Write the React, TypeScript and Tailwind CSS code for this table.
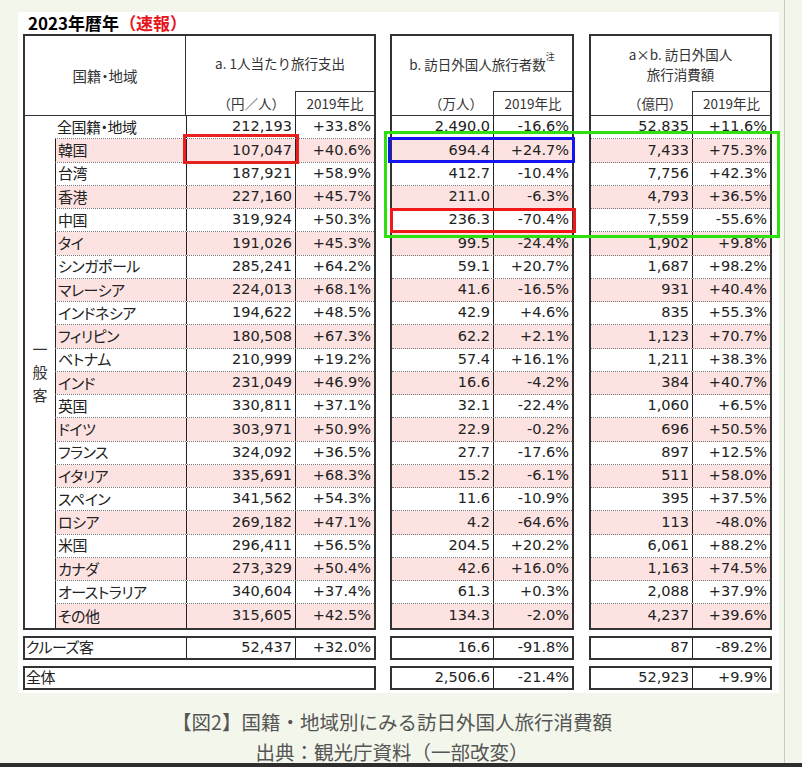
import React from 'react';

// 国籍・地域別 訪日外国人旅行消費額（2023年暦年 速報）
const rows: string[][] = [
  ['全国籍・地域', '212,193', '+33.8%', '2,490.0', '-16.6%', '52,835', '+11.6%'],
  ['韓国', '107,047', '+40.6%', '694.4', '+24.7%', '7,433', '+75.3%'],
  ['台湾', '187,921', '+58.9%', '412.7', '-10.4%', '7,756', '+42.3%'],
  ['香港', '227,160', '+45.7%', '211.0', '-6.3%', '4,793', '+36.5%'],
  ['中国', '319,924', '+50.3%', '236.3', '-70.4%', '7,559', '-55.6%'],
  ['タイ', '191,026', '+45.3%', '99.5', '-24.4%', '1,902', '+9.8%'],
  ['シンガポール', '285,241', '+64.2%', '59.1', '+20.7%', '1,687', '+98.2%'],
  ['マレーシア', '224,013', '+68.1%', '41.6', '-16.5%', '931', '+40.4%'],
  ['インドネシア', '194,622', '+48.5%', '42.9', '+4.6%', '835', '+55.3%'],
  ['フィリピン', '180,508', '+67.3%', '62.2', '+2.1%', '1,123', '+70.7%'],
  ['ベトナム', '210,999', '+19.2%', '57.4', '+16.1%', '1,211', '+38.3%'],
  ['インド', '231,049', '+46.9%', '16.6', '-4.2%', '384', '+40.7%'],
  ['英国', '330,811', '+37.1%', '32.1', '-22.4%', '1,060', '+6.5%'],
  ['ドイツ', '303,971', '+50.9%', '22.9', '-0.2%', '696', '+50.5%'],
  ['フランス', '324,092', '+36.5%', '27.7', '-17.6%', '897', '+12.5%'],
  ['イタリア', '335,691', '+68.3%', '15.2', '-6.1%', '511', '+58.0%'],
  ['スペイン', '341,562', '+54.3%', '11.6', '-10.9%', '395', '+37.5%'],
  ['ロシア', '269,182', '+47.1%', '4.2', '-64.6%', '113', '-48.0%'],
  ['米国', '296,411', '+56.5%', '204.5', '+20.2%', '6,061', '+88.2%'],
  ['カナダ', '273,329', '+50.4%', '42.6', '+16.0%', '1,163', '+74.5%'],
  ['オーストラリア', '340,604', '+37.4%', '61.3', '+0.3%', '2,088', '+37.9%'],
  ['その他', '315,605', '+42.5%', '134.3', '-2.0%', '4,237', '+39.6%'],
];

const jp = "font-['Noto_Sans_CJK_JP',sans-serif]";
const name = `${jp} text-[15px] text-[#222] tracking-[-0.5px] [font-feature-settings:'palt']`;
const num = "font-['DejaVu_Sans','Noto_Sans_CJK_JP',sans-serif] text-[14.5px] text-[#222]";

function rowBg(i: number) {
  return i % 2 === 1 ? 'bg-[#fde2e2]' : 'bg-white';
}

function rowLine(i: number) {
  return i < rows.length - 1 ? 'border-b border-dotted border-b-[#777]' : '';
}

function NumCell({ value, width, first }: { value: string; width: string; first?: boolean }) {
  return (
    <div className={`${width} ${first ? '' : 'border-l border-l-[#222]'} h-full flex items-center justify-end pr-[3px] ${num}`}>
      {value}
    </div>
  );
}

function MainTableA() {
  return (
    <div className="w-[353px] border-2 border-[#333] bg-white">
      {/* ヘッダー */}
      <div className="flex h-[80px] border-b border-[#333]">
        <div className={`w-[161px] border-r border-[#333] flex items-center justify-center text-[14.5px] text-[#333] ${jp} [font-feature-settings:'palt']`}>
          国籍・地域
        </div>
        <div className="flex-1 flex flex-col">
          <div className={`flex-1 flex items-center justify-center text-[13.5px] text-[#333] ${jp}`}>
            a. 1人当たり旅行支出
          </div>
          <div className="flex h-[24px]">
            <div className={`w-[109px] flex items-center justify-end pr-[10px] text-[13.5px] text-[#333] ${jp}`}>（円／人）</div>
            <div className={`flex-1 border-l border-t border-[#333] flex items-center justify-center text-[13.5px] text-[#333] ${jp}`}>2019年比</div>
          </div>
        </div>
      </div>
      {/* 本体 */}
      <div className="flex">
        <div className={`w-[30px] flex flex-col items-center justify-center text-[15px] leading-[23px] text-[#333] ${jp}`}>
          <span>一</span>
          <span>般</span>
          <span>客</span>
        </div>
        <div className="flex-1 flex flex-col">
          {rows.map((r, i) => (
            <div key={r[0]} className={`flex h-[23.25px] ${rowLine(i)}`}>
              <div className={`w-[131px] h-full flex items-center pl-[2px] ${name} ${i === 0 ? 'bg-white' : `border-l border-l-[#222] ${rowBg(i)}`}`}>
                {r[0]}
              </div>
              <div className={`flex flex-1 h-full ${rowBg(i)}`}>
                <NumCell value={r[1]} width="w-[109px]" />
                <NumCell value={r[2]} width="flex-1" />
              </div>
            </div>
          ))}
        </div>
      </div>
    </div>
  );
}

function MainTable({ width, valueWidth, title, unit, a, b }: { width: string; valueWidth: string; title: React.ReactNode; unit: string; a: number; b: number }) {
  return (
    <div className={`${width} border-2 border-[#333] bg-white`}>
      <div className="flex flex-col h-[80px] border-b border-[#333]">
        <div className={`flex-1 flex flex-col items-center justify-center text-[13.5px] leading-[20px] text-[#333] ${jp}`}>
          {title}
        </div>
        <div className="flex h-[24px]">
          <div className={`${valueWidth} flex items-center justify-end pr-[10px] text-[13.5px] text-[#333] ${jp}`}>{unit}</div>
          <div className={`flex-1 border-l border-t border-[#333] flex items-center justify-center text-[13.5px] text-[#333] ${jp}`}>2019年比</div>
        </div>
      </div>
      <div className="flex flex-col">
        {rows.map((r, i) => (
          <div key={r[0]} className={`flex h-[23.25px] ${rowBg(i)} ${rowLine(i)}`}>
            <NumCell value={r[a]} width={valueWidth} first />
            <NumCell value={r[b]} width="flex-1" />
          </div>
        ))}
      </div>
    </div>
  );
}

function SmallRow({ width, cells }: { width: string; cells: { text: string; w: string; left?: boolean }[] }) {
  return (
    <div className={`${width} h-[24px] border-2 border-[#333] bg-white flex`}>
      {cells.map((c, i) => (
        <div
          key={i}
          className={`${c.w} h-full flex items-center ${i > 0 ? 'border-l border-l-[#222]' : ''} ${c.left ? `justify-start pl-[1px] ${name}` : `justify-end pr-[3px] ${num}`}`}
        >
          {c.text}
        </div>
      ))}
    </div>
  );
}

export default function App() {
  return (
    <div className="relative w-[802px] h-[767px] overflow-hidden bg-[#f3f6ea] flex">
      <div className="w-[785px] h-full border-r border-r-[#c9ccc2] flex flex-col">
        {/* 表パネル */}
        <div className="relative ml-[18px] mt-[12px] w-[761px] h-[681px] bg-white">
          <div className={`h-[22px] pl-[10px] flex items-center text-[17px] font-bold text-black ${jp}`}>
            2023年暦年<span className="text-[#e8141c]">（速報）</span>
          </div>

          <div className="flex pl-[5px]">
            <div className="flex flex-col gap-[6px]">
              <MainTableA />
              <SmallRow
                width="w-[353px]"
                cells={[
                  { text: 'クルーズ客', w: 'w-[161px]', left: true },
                  { text: '52,437', w: 'w-[109px]' },
                  { text: '+32.0%', w: 'flex-1' },
                ]}
              />
              <SmallRow width="w-[353px]" cells={[{ text: '全体', w: 'flex-1', left: true }]} />
            </div>

            <div className="flex flex-col gap-[6px] ml-[14px]">
              <MainTable
                width="w-[184px]"
                valueWidth="w-[101px]"
                title={
                  <span>
                    b. 訪日外国人旅行者数<sup className="text-[9px] align-super">注</sup>
                  </span>
                }
                unit="（万人）"
                a={3}
                b={4}
              />
              <SmallRow
                width="w-[184px]"
                cells={[
                  { text: '16.6', w: 'w-[101px]' },
                  { text: '-91.8%', w: 'flex-1' },
                ]}
              />
              <SmallRow
                width="w-[184px]"
                cells={[
                  { text: '2,506.6', w: 'w-[101px]' },
                  { text: '-21.4%', w: 'flex-1' },
                ]}
              />
            </div>

            <div className="flex flex-col gap-[6px] ml-[15px]">
              <MainTable
                width="w-[183px]"
                valueWidth="w-[101px]"
                title={
                  <>
                    <span>a×b. 訪日外国人</span>
                    <span>旅行消費額</span>
                  </>
                }
                unit="（億円）"
                a={5}
                b={6}
              />
              <SmallRow
                width="w-[183px]"
                cells={[
                  { text: '87', w: 'w-[101px]' },
                  { text: '-89.2%', w: 'flex-1' },
                ]}
              />
              <SmallRow
                width="w-[183px]"
                cells={[
                  { text: '52,923', w: 'w-[101px]' },
                  { text: '+9.9%', w: 'flex-1' },
                ]}
              />
            </div>
          </div>

          {/* 強調枠 */}
          <div className="absolute left-[366px] top-[119px] w-[396px] h-[107px] border-[3px] border-[#2ee00e]" />
          <div className="absolute left-[370px] top-[125px] w-[187px] h-[26px] border-[3px] border-[#1414f0]" />
          <div className="absolute left-[165px] top-[122px] w-[116px] h-[30px] border-[3px] border-[#e8201e]" />
          <div className="absolute left-[372px] top-[196px] w-[186px] h-[25px] border-[3px] border-[#f01818]" />
        </div>

        {/* キャプション */}
        <div className={`mt-[14px] flex flex-col items-center text-[19.5px] leading-[30px] text-[#555] ${jp}`}>
          <p>【図2】国籍・地域別にみる訪日外国人旅行消費額</p>
          <p>出典：観光庁資料（一部改変）</p>
        </div>
      </div>

      <div className="absolute left-0 right-0 bottom-0 h-[4px] bg-[#2e2e2e]" />
    </div>
  );
}
